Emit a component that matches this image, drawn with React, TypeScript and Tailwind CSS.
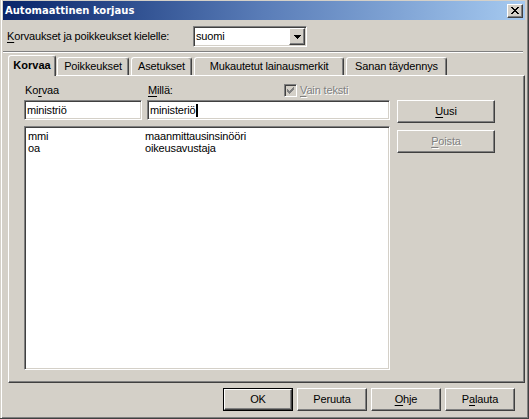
import React from "react";

const raised =
  "border border-t-white border-l-white border-r-[#404040] border-b-[#404040] shadow-[inset_-1px_-1px_0_#808080]";
const sunken =
  "border border-t-[#808080] border-l-[#808080] border-r-white border-b-white shadow-[inset_1px_1px_0_#404040,inset_-1px_-1px_0_#d4d0c8]";
const disabledText = "text-[#808080] [text-shadow:1px_1px_0_#ffffff]";

function U({ children }: { children: React.ReactNode }) {
  return <span className="underline underline-offset-[2px] decoration-1">{children}</span>;
}

function Pixels({ w, h, px, color }: { w: number; h: number; px: [number, number][]; color: string }) {
  return (
    <svg width={w} height={h} viewBox={`0 0 ${w} ${h}`} shapeRendering="crispEdges">
      {px.map(([x, y], i) => (
        <rect key={i} x={x} y={y} width={1} height={1} fill={color} />
      ))}
    </svg>
  );
}

const closeX: [number, number][] = [
  [0, 0], [1, 0], [6, 0], [7, 0],
  [1, 1], [2, 1], [5, 1], [6, 1],
  [2, 2], [3, 2], [4, 2], [5, 2],
  [3, 3], [4, 3],
  [2, 4], [3, 4], [4, 4], [5, 4],
  [1, 5], [2, 5], [5, 5], [6, 5],
  [0, 6], [1, 6], [6, 6], [7, 6],
];

const check: [number, number][] = [
  [6, 0],
  [5, 1], [6, 1],
  [0, 2], [4, 2], [5, 2], [6, 2],
  [0, 3], [1, 3], [3, 3], [4, 3], [5, 3],
  [0, 4], [1, 4], [2, 4], [3, 4], [4, 4],
  [1, 5], [2, 5], [3, 5],
  [2, 6],
];

const arrow: [number, number][] = [
  [0, 0], [1, 0], [2, 0], [3, 0], [4, 0], [5, 0], [6, 0],
  [1, 1], [2, 1], [3, 1], [4, 1], [5, 1],
  [2, 2], [3, 2], [4, 2],
  [3, 3],
];

function Button({
  children,
  disabled,
  isDefault,
  className = "",
}: {
  children: React.ReactNode;
  disabled?: boolean;
  isDefault?: boolean;
  className?: string;
}) {
  const inner = (
    <div
      className={`${raised} h-full w-full flex items-center justify-center ${disabled ? disabledText : ""}`}
    >
      {children}
    </div>
  );
  if (isDefault) {
    return <div className={`border border-black ${className}`}>{inner}</div>;
  }
  return <div className={className}>{inner}</div>;
}

function Tab({ label, className }: { label: string; className: string }) {
  return (
    <div
      className={`h-[18px] flex items-center justify-center border-l border-t border-r border-l-white border-t-white border-r-[#404040] shadow-[inset_-1px_0_0_#808080] rounded-t-[3px] ${className}`}
    >
      {label}
    </div>
  );
}

export default function App() {
  return (
    <div className="w-[529px] h-[419px] bg-[#d4d0c8] pt-[1px] pl-[3px] pr-[3px] border-r border-b border-r-[#404040] border-b-[#404040] shadow-[inset_1px_0_0_#d4d0c8,inset_2px_0_0_#ffffff,inset_-1px_-1px_0_#808080] font-['Liberation_Sans',Arial,sans-serif] text-[11px] tracking-[-0.15px] text-black leading-[13px]">
      {/* title bar */}
      <div className="h-[19px] flex items-center justify-between pl-[2px] pr-[2px] bg-linear-to-r from-[#0a246a] via-[#5a7db8] to-[#a6caf0]">
        <span className="text-white font-bold text-[10px] tracking-normal font-['DejaVu_Sans',sans-serif]">
          Automaattinen korjaus
        </span>
        <div className={`${raised} w-[16px] h-[14px] bg-[#d4d0c8] flex items-center justify-center`}>
          <Pixels w={8} h={7} px={closeX} color="#000" />
        </div>
      </div>

      {/* language row */}
      <div className="mt-[6px] h-[21px] flex items-center pl-[4px]">
        <span className="w-[186px]">
          <U>K</U>orvaukset ja poikkeukset kielelle:
        </span>
        <div className={`${sunken} w-[114px] h-[21px] bg-white flex items-center p-[1px]`}>
          <span className="flex-1 pl-[1px]">suomi</span>
          <div className={`${raised} w-[16px] h-[17px] bg-[#d4d0c8] flex items-center justify-center`}>
            <Pixels w={7} h={4} px={arrow} color="#000" />
          </div>
        </div>
      </div>

      {/* separator */}
      <div className="mt-[4px] h-[2px] mr-[2px] border-t border-t-[#808080] border-b border-b-white" />

      {/* tabs */}
      <div className="mt-[2px] ml-[5px] h-[20px] flex items-end">
        <div className="relative z-10 -mb-[1px] h-[21px] w-[48px] pb-[2px] bg-[#d4d0c8] flex items-center justify-center font-bold tracking-normal border-l border-t border-r border-l-white border-t-white border-r-[#404040] shadow-[inset_-1px_0_0_#808080] rounded-t-[3px]">
          Korvaa
        </div>
        <Tab label="Poikkeukset" className="ml-[1px] w-[72px]" />
        <Tab label="Asetukset" className="ml-[2px] w-[61px]" />
        <Tab label="Mukautetut lainausmerkit" className="ml-[2px] w-[150px]" />
        <Tab label="Sanan täydennys" className="ml-[2px] w-[101px]" />
      </div>

      {/* panel */}
      <div className={`${raised} ml-[5px] h-[308px] flex pl-[15px]`}>
        <div className="w-[366px] flex flex-col">
          <div className="mt-[8px] h-[13px] flex items-center">
            <span className="w-[124px] pl-[1px]">
              Ko<U>r</U>vaa
            </span>
            <span className="w-[136px]">
              <U>M</U>illä:
            </span>
            <div className={`${sunken} w-[13px] h-[13px] bg-[#d4d0c8] flex items-center justify-center`}>
              <Pixels w={7} h={7} px={check} color="#808080" />
            </div>
            <span className={`ml-[3px] ${disabledText}`}>
              <U>V</U>ain teksti
            </span>
          </div>
          <div className="mt-[3px] flex">
            <div className={`${sunken} w-[118px] h-[20px] bg-white flex items-center pl-[2px]`}>ministriö</div>
            <div className={`${sunken} ml-[5px] w-[243px] h-[20px] bg-white flex items-center pl-[2px]`}>
              ministeriö
              <span className="inline-block w-[2px] h-[13px] bg-black" />
            </div>
          </div>
          <div className={`${sunken} mt-[6px] w-[366px] h-[244px] bg-white pt-[3px] pl-[2px]`}>
            <div className="flex h-[12px] items-center">
              <span className="w-[118px] pl-[1px]">mmi</span>
              <span>maanmittausinsinööri</span>
            </div>
            <div className="flex h-[12px] items-center">
              <span className="w-[118px] pl-[1px]">oa</span>
              <span>oikeusavustaja</span>
            </div>
          </div>
        </div>
        <div className="ml-[7px] w-[98px] flex flex-col">
          <Button className="mt-[24px] h-[23px]">
            <U>U</U>usi
          </Button>
          <Button disabled className="mt-[7px] h-[23px]">
            <U>P</U>oista
          </Button>
        </div>
      </div>

      {/* bottom buttons */}
      <div className="mt-[5px] flex justify-end gap-[4px] pr-[10px]">
        <Button isDefault className="w-[70px] h-[23px]">
          OK
        </Button>
        <Button className="w-[70px] h-[23px]">Peruuta</Button>
        <Button className="w-[70px] h-[23px]">
          <U>O</U>hje
        </Button>
        <Button className="w-[70px] h-[23px]">
          P<U>a</U>lauta
        </Button>
      </div>
    </div>
  );
}
